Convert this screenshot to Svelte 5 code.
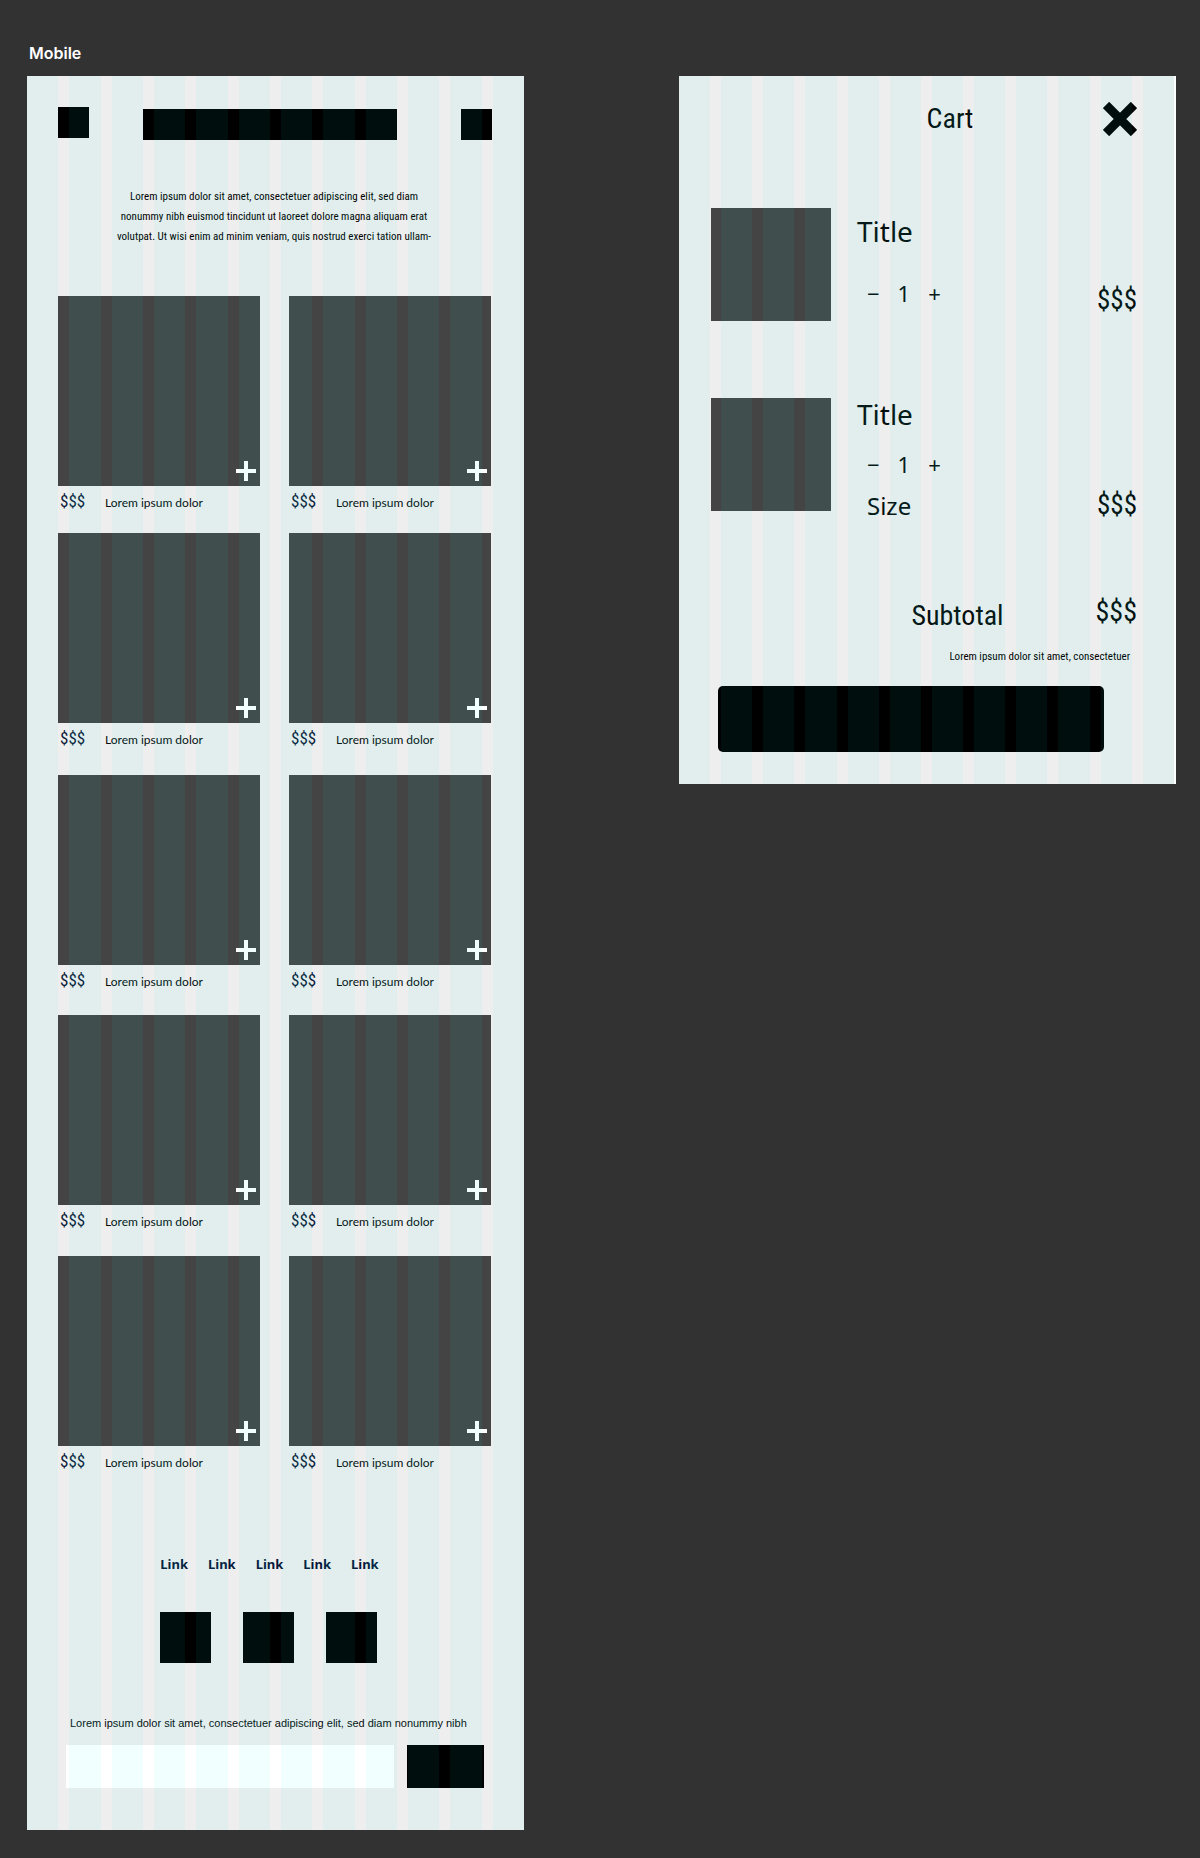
<script>
  const products = Array.from({ length: 10 }, (_, i) => ({ id: i, price: '$$$', name: 'Lorem ipsum dolor' }));
  const links = ['Link', 'Link', 'Link', 'Link', 'Link'];
  const columns = Array.from({ length: 12 }, (_, i) => i);
  let quantities = $state([1, 1]);

  function change(index, step) {
    quantities[index] = Math.max(0, quantities[index] + step);
  }
</script>

{#snippet guides()}
  <div class="guides" aria-hidden="true">
    {#each columns as column (column)}
      <span></span>
    {/each}
  </div>
{/snippet}

{#snippet quantity(index)}
  <div class="quantity">
    <button type="button" aria-label="Decrease quantity" onclick={() => change(index, -1)}>−</button>
    <output>{quantities[index]}</output>
    <button type="button" aria-label="Increase quantity" onclick={() => change(index, 1)}>+</button>
  </div>
{/snippet}

<div class="board">
  <h1>Mobile</h1>

  <main class="panel shop">
    <header>
      <button class="square menu" type="button" aria-label="Menu"></button>
      <div class="brand"></div>
      <button class="square" type="button" aria-label="Open cart"></button>
    </header>

    <p class="intro">
      Lorem ipsum dolor sit amet, consectetuer adipiscing elit, sed diam<br />
      nonummy nibh euismod tincidunt ut laoreet dolore magna aliquam erat<br />
      volutpat. Ut wisi enim ad minim veniam, quis nostrud exerci tation ullam-
    </p>

    <section class="products">
      {#each products as product (product.id)}
        <article>
          <div class="photo">
            <button type="button" aria-label="Add to cart">
              <svg viewBox="0 0 20 20" width="20" height="20"><path d="M10 0v20M0 10h20" /></svg>
            </button>
          </div>
          <div class="caption">
            <span class="price">{product.price}</span>
            <span class="name">{product.name}</span>
          </div>
        </article>
      {/each}
    </section>

    <footer>
      <nav>
        {#each links as link}
          <a href="#top">{link}</a>
        {/each}
      </nav>
      <div class="social">
        <a href="#one" aria-label="Social one"></a>
        <a href="#two" aria-label="Social two"></a>
        <a href="#three" aria-label="Social three"></a>
      </div>
      <form onsubmit={(event) => event.preventDefault()}>
        <label for="email">Lorem ipsum dolor sit amet, consectetuer adipiscing elit, sed diam nonummy nibh</label>
        <div class="fields">
          <input id="email" type="text" />
          <button type="submit" aria-label="Submit"></button>
        </div>
      </form>
    </footer>
    {@render guides()}
  </main>

  <aside class="panel cart">
    <div class="cart-head">
      <h2>Cart</h2>
      <button type="button" aria-label="Close cart">
        <svg viewBox="0 0 34 34" width="34" height="34"><path d="M3 3l28 28M31 3L3 31" /></svg>
      </button>
    </div>

    <div class="item">
      <div class="thumb"></div>
      <div class="details">
        <h3>Title</h3>
        {@render quantity(0)}
      </div>
      <span class="cost">$$$</span>
    </div>

    <div class="item sized">
      <div class="thumb"></div>
      <div class="details">
        <h3>Title</h3>
        {@render quantity(1)}
        <p class="size">Size</p>
      </div>
      <span class="cost">$$$</span>
    </div>

    <div class="subtotal">
      <span>Subtotal</span>
      <span class="total">$$$</span>
    </div>
    <p class="note">Lorem ipsum dolor sit amet, consectetuer</p>
    <button class="checkout" type="button" aria-label="Checkout"></button>
    {@render guides()}
  </aside>
</div>

<style>
  :global(body) {
    margin: 0;
    background: #323232;
  }
  .board {
    --narrow: 'Ubuntu Condensed', 'Roboto Condensed', 'Liberation Sans Narrow', sans-serif;
    --sans: 'Noto Sans', sans-serif;
    display: grid;
    grid-template-columns: minmax(0, 1fr) minmax(0, 1fr);
    column-gap: 155px;
    align-items: start;
    padding: 40px 24px 27px 27px;
    color: #060e0e;
    font-family: var(--sans);
  }
  h1,
  h2,
  h3,
  p {
    margin: 0;
    font-weight: 400;
  }
  button {
    padding: 0;
    border: 0;
    background: none;
    color: inherit;
    font: inherit;
    cursor: pointer;
  }
  svg {
    display: block;
    fill: none;
  }
  h1 {
    grid-column: 1 / -1;
    padding: 3px 2px 13px;
    color: #fff;
    font: 600 16px/20px Inter, sans-serif;
  }
  .panel {
    position: relative;
    box-sizing: border-box;
    background: #efeeee;
  }
  .guides {
    position: absolute;
    inset: 0;
    display: grid;
    grid-template-columns: repeat(12, minmax(0, 1fr));
    column-gap: 11px;
    pointer-events: none;
  }
  .guides span {
    background: rgba(0, 255, 240, 0.055);
  }

  .shop {
    padding: 31px 32px 42px 31px;
  }
  header {
    display: flex;
    align-items: flex-end;
    height: 33px;
  }
  .square {
    width: 31px;
    height: 31px;
    background: #000;
  }
  .menu {
    align-self: flex-start;
  }
  .brand {
    flex: 1;
    height: 31px;
    margin: 0 64px 0 54px;
    background: #000;
  }
  .intro {
    margin-top: 47px;
    padding-right: 2px;
    color: #000;
    font: 11px/20px var(--narrow);
    text-align: center;
    white-space: nowrap;
  }
  .products {
    display: grid;
    grid-template-columns: 1fr 1fr;
    grid-template-rows: minmax(237px, auto) minmax(242px, auto) minmax(240px, auto) minmax(241px, auto) auto;
    column-gap: 29px;
    margin-top: 49px;
    padding-right: 1px;
  }
  .photo {
    display: flex;
    align-items: flex-end;
    justify-content: flex-end;
    box-sizing: border-box;
    height: 190px;
    padding: 0 4px 5px;
    background: #444;
  }
  .photo path {
    stroke: #fff;
    stroke-width: 4;
  }
  .caption {
    display: flex;
    align-items: baseline;
    padding: 4px 2px 0;
    line-height: 22px;
  }
  .price {
    width: 45px;
    color: #0b1a38;
    font: 17px/22px var(--narrow);
  }
  .name {
    font: 12px/22px Lato, sans-serif;
  }
  nav {
    display: flex;
    justify-content: center;
    gap: 20px;
    margin-top: 80px;
    padding-right: 11px;
    font-size: 13px;
    font-weight: 700;
    line-height: 20px;
  }
  nav a {
    color: #06163a;
    text-decoration: none;
  }
  .social {
    display: flex;
    justify-content: center;
    gap: 32px;
    margin-top: 38px;
    padding-right: 13px;
  }
  .social a {
    width: 51px;
    height: 51px;
    background: #000;
  }
  form {
    margin-top: 50px;
    padding: 0 8px;
  }
  label {
    display: block;
    padding-left: 4px;
    font: 11px/20px 'Liberation Sans', sans-serif;
    white-space: nowrap;
  }
  .fields {
    display: flex;
    gap: 13px;
    margin-top: 12px;
  }
  .fields input {
    flex: 1;
    box-sizing: border-box;
    min-width: 0;
    height: 43px;
    padding: 0 12px;
    border: 0;
    background: #fff;
    font: 14px var(--sans);
  }
  .fields button {
    width: 77px;
    background: #000;
  }

  .cart {
    padding: 26px 37px 32px 32px;
    border-right: 2px solid #fcfffe;
  }
  .cart-head {
    display: grid;
    grid-template-columns: 1fr auto 1fr;
    align-items: center;
    padding-left: 52px;
    font: 28px/34px var(--narrow);
  }
  h2 {
    grid-column: 2;
    font: inherit;
  }
  .cart-head button {
    justify-self: end;
  }
  .cart-head path {
    stroke: #000;
    stroke-width: 9;
  }
  .item {
    display: flex;
    margin-top: 72px;
  }
  .item.sized {
    margin-top: 77px;
  }
  .thumb {
    width: 120px;
    height: 113px;
    margin-right: 26px;
    background: #444;
  }
  .details {
    flex: 1;
  }
  h3 {
    margin-top: 7px;
    font-size: 28px;
    line-height: 32px;
  }
  .quantity {
    display: flex;
    gap: 18px;
    margin: 32px 0 0 10px;
    font-size: 22px;
    line-height: 28px;
  }
  .sized h3 {
    margin-top: 0;
  }
  .sized .quantity {
    margin-top: 20px;
  }
  .size {
    margin: 14px 0 0 10px;
    font-size: 24px;
    line-height: 28px;
  }
  .cost {
    align-self: flex-end;
    padding-bottom: 4px;
    font: 27px/34px var(--narrow);
  }
  .sized .cost {
    padding: 0;
    line-height: 30px;
  }
  .subtotal {
    display: flex;
    align-items: flex-end;
    justify-content: flex-end;
    gap: 92px;
    margin-top: 74px;
    font: 28px/36px var(--narrow);
  }
  .total {
    padding-bottom: 4px;
  }
  .note {
    margin-top: 13px;
    padding-right: 7px;
    color: #000;
    font: 11px/20px var(--narrow);
    text-align: right;
  }
  .checkout {
    display: block;
    width: calc(100% - 40px);
    height: 66px;
    margin: 19px 0 0 7px;
    border-radius: 5px;
    background: #000;
  }
</style>
